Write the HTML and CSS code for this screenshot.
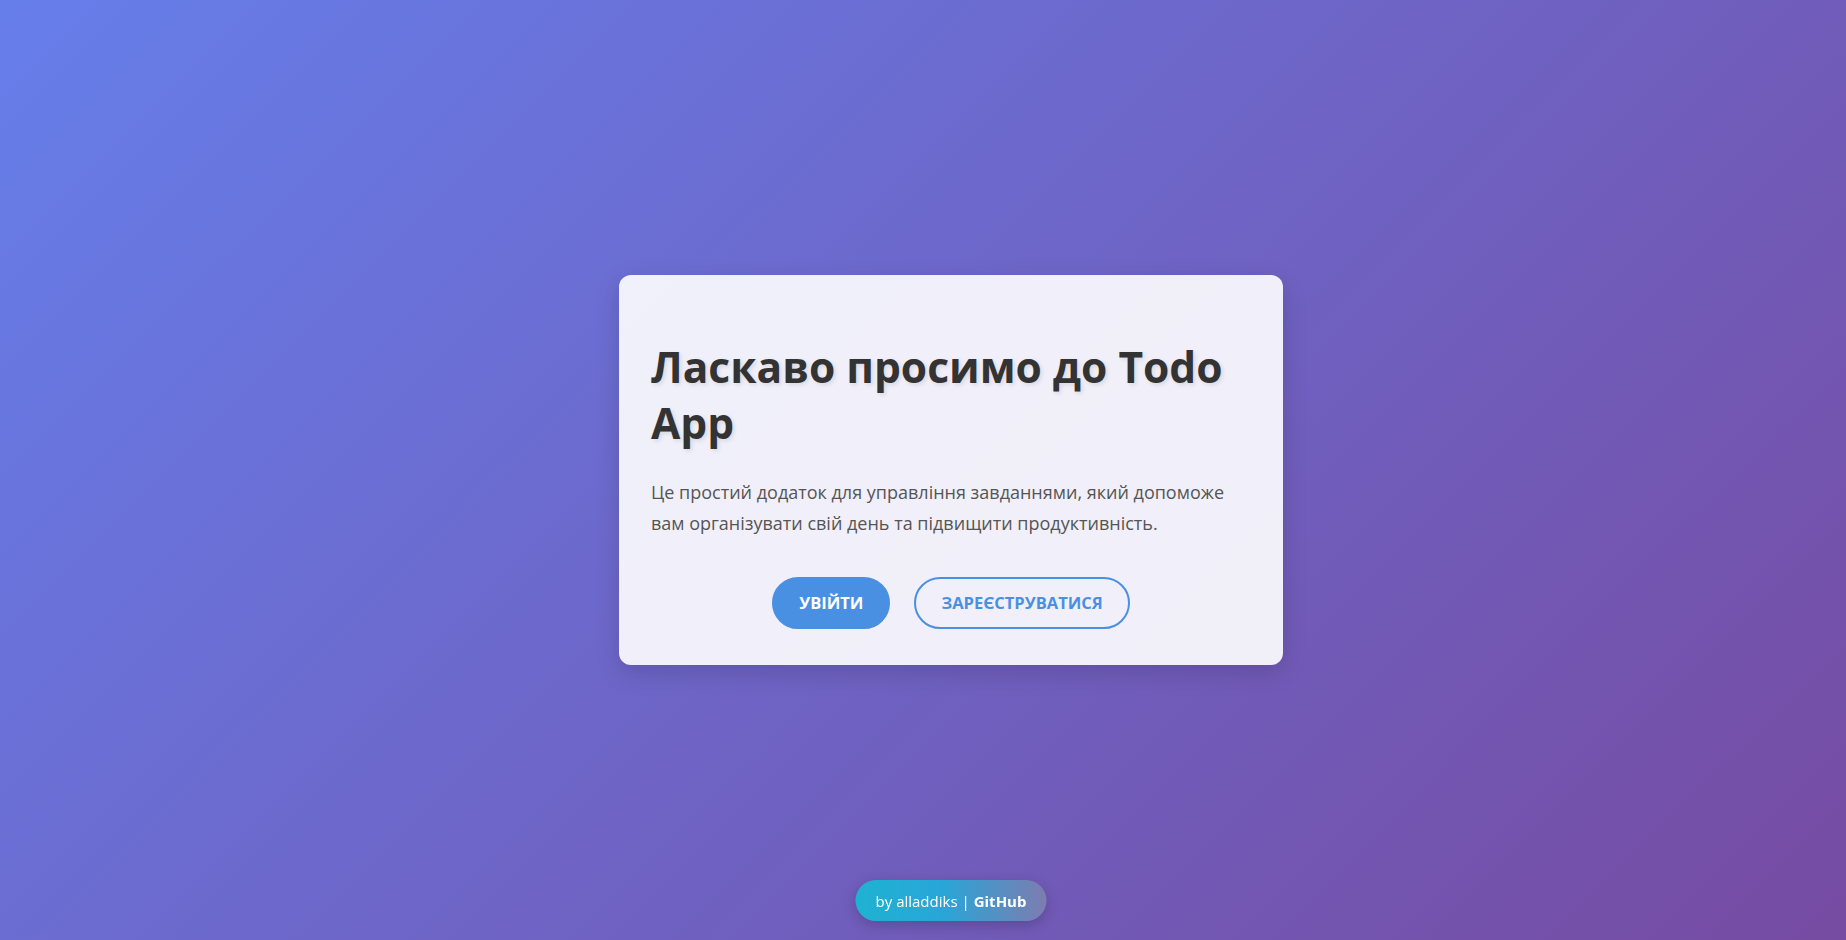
FILE: index.html
```html
<!DOCTYPE html>
<html lang="uk">
<head>
<meta charset="utf-8">
<title>Todo App</title>
<link rel="stylesheet" href="styles.css">
</head>
<body>
<div class="page">
  <main class="card">
    <h1 class="title">Ласкаво просимо до Todo App</h1>
    <p class="lead">Це простий додаток для управління завданнями, який допоможе вам організувати свій день та підвищити продуктивність.</p>
    <div class="actions">
      <a class="btn btn-primary" href="#">Увійти</a>
      <a class="btn btn-outline" href="#">Зареєструватися</a>
    </div>
  </main>
</div>
<footer class="credit">by alladdiks | <b>GitHub</b></footer>
</body>
</html>
```
FILE: styles.css
```css
html, body {
  margin: 0;
  padding: 0;
  height: 100%;
}
body {
  font-family: "Open Sans", "Noto Sans", sans-serif;
  background: linear-gradient(135deg, #667eea 0%, #764ba2 100%);
  color: #333;
}
.page {
  box-sizing: border-box;
  min-height: 100vh;
  padding-left: 56px;
  display: flex;
  align-items: center;
  justify-content: center;
}
.card {
  box-sizing: border-box;
  width: 664px;
  padding: 32px 32px 36px;
  background: rgba(255, 255, 255, 0.9);
  border-radius: 12px;
  box-shadow: 0 8px 24px rgba(0, 0, 0, 0.15);
}
.title {
  font-size: 42.5px;
  line-height: 56px;
  font-weight: 700;
  margin: 32px 0 26px;
  color: #333;
  letter-spacing: 0;
  text-shadow: 2px 2px 4px rgba(0, 0, 0, 0.1);
}
.lead {
  font-size: 18px;
  line-height: 30.6px;
  color: #555;
  margin: 0 0 38px;
}
.actions {
  display: flex;
  justify-content: center;
  gap: 24px;
}
.btn {
  box-sizing: border-box;
  height: 52px;
  display: inline-flex;
  align-items: center;
  padding: 0 25px;
  border-radius: 26px;
  font-size: 16.5px;
  font-weight: 700;
  text-transform: uppercase;
  text-decoration: none;
}
.btn-primary {
  background: #4a90e2;
  color: #fff;
  border: 2px solid #4a90e2;
}
.btn-outline {
  background: transparent;
  color: #4a90e2;
  border: 2px solid #4a90e2;
}
.credit {
  position: fixed;
  bottom: 19px;
  left: calc(50% + 28px);
  transform: translateX(-50%);
  height: 41px;
  box-sizing: border-box;
  padding: 0 20px;
  display: flex;
  align-items: center;
  white-space: nowrap;
  border-radius: 21px;
  background: linear-gradient(90deg, #1fb2d2 0%, #28a6d8 45%, #7d7cb0 100%);
  color: #fff;
  font-size: 15px;
  box-shadow: 0 4px 14px rgba(0, 0, 0, 0.2);
}
.credit b {
  margin-left: 4px;
}
```
